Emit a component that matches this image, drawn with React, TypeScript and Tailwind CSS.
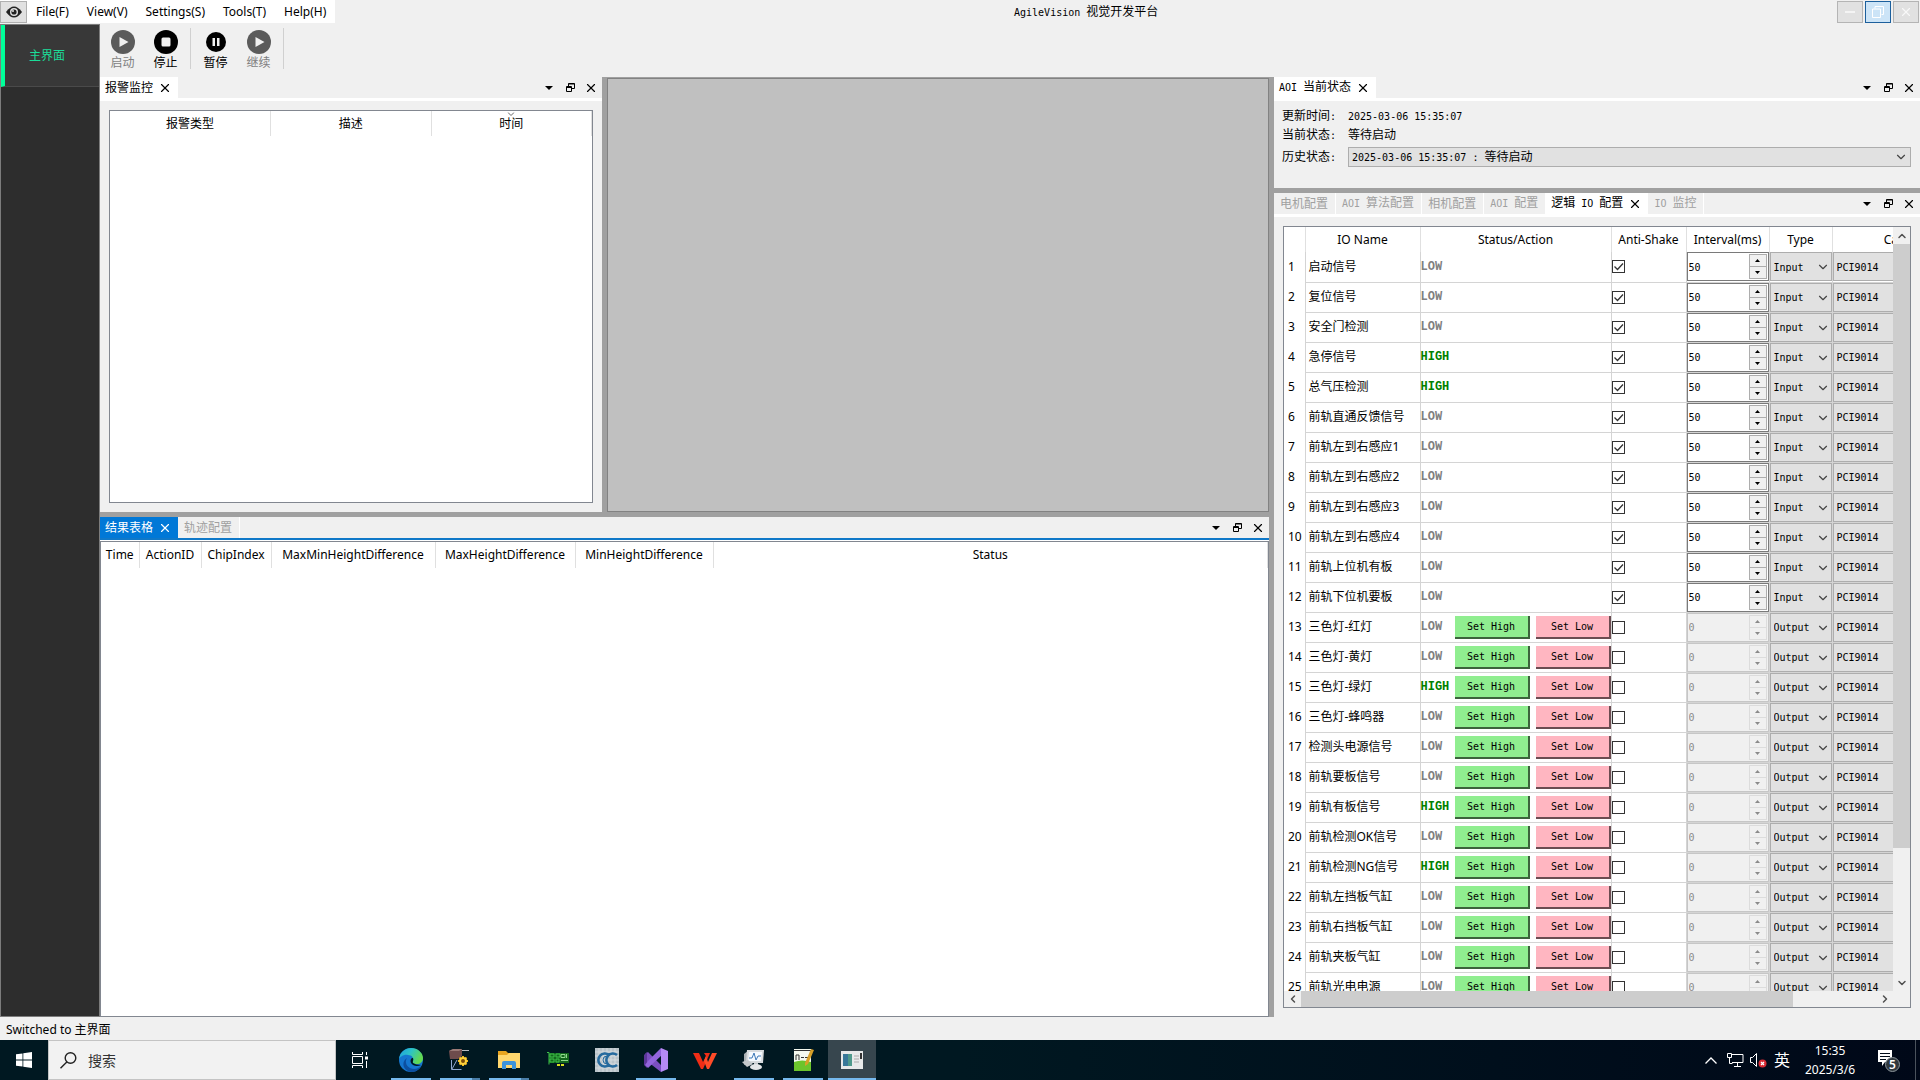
import * as React from "react";
import { ChevronDown, ChevronLeft, ChevronRight, ChevronUp, X } from "lucide-react";

interface IoRow {
  name: string;
  high?: boolean;
  output?: boolean;
}

const ioRows: IoRow[] = [
  { name: "启动信号" },
  { name: "复位信号" },
  { name: "安全门检测" },
  { name: "急停信号", high: true },
  { name: "总气压检测", high: true },
  { name: "前轨直通反馈信号" },
  { name: "前轨左到右感应1" },
  { name: "前轨左到右感应2" },
  { name: "前轨左到右感应3" },
  { name: "前轨左到右感应4" },
  { name: "前轨上位机有板" },
  { name: "前轨下位机要板" },
  { name: "三色灯-红灯", output: true },
  { name: "三色灯-黄灯", output: true },
  { name: "三色灯-绿灯", output: true, high: true },
  { name: "三色灯-蜂鸣器", output: true },
  { name: "检测头电源信号", output: true },
  { name: "前轨要板信号", output: true },
  { name: "前轨有板信号", output: true, high: true },
  { name: "前轨检测OK信号", output: true },
  { name: "前轨检测NG信号", output: true, high: true },
  { name: "前轨左挡板气缸", output: true },
  { name: "前轨右挡板气缸", output: true },
  { name: "前轨夹板气缸", output: true },
  { name: "前轨光电电源", output: true },
];

// Latin runs are set in a 6px wide mono face, Chinese runs in 12px glyphs
const Fixed: React.FC<{ children: string }> = ({ children }) => (
  <span className="whitespace-pre">
    {children.split(/([\x20-\x7e]+)/).map((part, i) =>
      i % 2 ? (
        <span key={i} className="font-['DejaVu_Sans_Mono',monospace] text-[10px]">
          {part}
        </span>
      ) : (
        part
      )
    )}
  </span>
);

const DockButtons: React.FC = () => (
  <div className="ml-auto flex items-center gap-[7px] pr-1">
    <button aria-label="菜单" className="flex w-[14px] justify-center">
      <svg width="8" height="4" viewBox="0 0 8 4">
        <path d="M0 0h8L4 4z" fill="#000" />
      </svg>
    </button>
    <button aria-label="浮动" className="flex w-[14px] justify-center">
      <svg width="9" height="9" viewBox="0 0 9 9" fill="none" stroke="#000">
        <path d="M2.5 3V.5h6v5H6M2.5 1h6M.5 3.5h5v5h-5zM.5 4.5h5" />
      </svg>
    </button>
    <button aria-label="关闭" className="flex w-[14px] justify-center">
      <X size={14} strokeWidth={2} />
    </button>
  </div>
);

interface DockTabsProps {
  tabs: string[];
  active: number;
  focused?: boolean;
}

const DockTabs: React.FC<DockTabsProps> = ({ tabs, active, focused }) => (
  <div
    className={`flex shrink-0 bg-[#f0f0f0] ${
      focused ? "mb-px h-[23px] border-b-2 border-[#0f78c8]" : "h-6 border-b-[3px] border-white"
    }`}
  >
    <div role="tablist" className="flex">
      {tabs.map((tab, i) =>
        i === active ? (
          <div
            key={tab}
            className={`flex items-center gap-[5px] pr-[6px] pl-[5px] ${
              focused ? "bg-[#0078d7] text-white" : "bg-white text-black"
            }`}
          >
            <button role="tab" aria-selected="true">
              <Fixed>{tab}</Fixed>
            </button>
            <button aria-label={`关闭 ${tab}`}>
              <X size={14} strokeWidth={2} />
            </button>
          </div>
        ) : (
          <button
            key={tab}
            role="tab"
            aria-selected="false"
            className="border-r border-white pr-[7px] pl-[6px] text-[#a0a0a0]"
          >
            <Fixed>{tab}</Fixed>
          </button>
        )
      )}
    </div>
    <DockButtons />
  </div>
);

const ToolButton: React.FC<{
  label: string;
  disabled?: boolean;
  children: React.ReactNode;
}> = ({ label, disabled, children }) => (
  <button
    disabled={disabled}
    className={`flex w-[43px] flex-col items-center pt-[6px] ${
      disabled ? "text-[#7f7f7f]" : "text-black"
    }`}
  >
    <svg width="24" height="24" viewBox="0 0 24 24">
      {children}
    </svg>
    <span className="leading-[17px]">{label}</span>
  </button>
);

const PlayIcon: React.FC = () => (
  <>
    <circle cx="12" cy="12" r="12" fill="#5b5b5b" />
    <path d="M8.5 7v10l9-5z" fill="#f0f0f0" />
  </>
);

const Toolbar: React.FC = () => (
  <div className="flex h-[53px] shrink-0 items-start pl-px">
    <ToolButton label="启动" disabled>
      <PlayIcon />
    </ToolButton>
    <ToolButton label="停止">
      <circle cx="12" cy="12" r="12" fill="#000" />
      <rect x="7.5" y="7.5" width="9" height="9" rx="1.5" fill="#f0f0f0" />
    </ToolButton>
    <div className="mx-[3px] mt-1 h-[41px] w-px bg-[#d0d0d0]" />
    <ToolButton label="暂停">
      <circle cx="12" cy="12" r="10" fill="#000" />
      <path d="M8.5 8h2.5v8H8.5zM13 8h2.5v8H13z" fill="#f0f0f0" />
    </ToolButton>
    <ToolButton label="继续" disabled>
      <PlayIcon />
    </ToolButton>
    <div className="mx-[3px] mt-1 h-[41px] w-px bg-[#d0d0d0]" />
  </div>
);

const MenuBar: React.FC = () => (
  <header className="flex h-6 shrink-0 items-start">
    <div className="flex h-[23px] items-center bg-white">
      <button
        aria-label="AgileVision"
        className="flex h-[22px] w-[27px] items-center justify-center border border-[#b0b0b0] bg-[#e1e1e1]"
      >
        <svg width="16" height="12" viewBox="0 0 16 12">
          <path d="M0 6Q8-5 16 6Q8 17 0 6z" fill="#222" />
          <circle cx="8" cy="6" r="4" fill="#e1e1e1" />
          <circle cx="8" cy="6" r="2.6" fill="#222" />
          <circle cx="7" cy="5" r="1" fill="#e1e1e1" />
        </svg>
      </button>
      <nav className="flex">
        {["File(F)", "View(V)", "Settings(S)", "Tools(T)", "Help(H)"].map((item) => (
          <button key={item} className="px-[9px] leading-[22px]">
            {item}
          </button>
        ))}
      </nav>
    </div>
    <h1 className="flex-1 text-center leading-6">
      <Fixed>AgileVision 视觉开发平台</Fixed>
    </h1>
    <div className="flex gap-[2px] pt-px pr-px">
      <button
        aria-label="最小化"
        className="flex h-[22px] w-[26px] items-center justify-center border border-[#b4b4b4] bg-[#e1e1e1]"
      >
        <span className="h-[2px] w-[10px] bg-[#f4f4f4]" />
      </button>
      <button
        aria-label="还原"
        className="flex h-[22px] w-[26px] items-center justify-center border border-[#1c5f9c] bg-[#cce4f7]"
      >
        <svg width="12" height="12" viewBox="0 0 12 12" fill="none" stroke="#fff">
          <path d="M3 2.5V.5h8.5v8H9.5M.5 3h8v8.5h-8z" />
        </svg>
      </button>
      <button
        aria-label="关闭窗口"
        className="flex h-[22px] w-[26px] items-center justify-center border border-[#b4b4b4] bg-[#e1e1e1]"
      >
        <X size={14} color="#f8f8f8" />
      </button>
    </div>
  </header>
);

const AlarmPanel: React.FC = () => (
  <section className="flex min-w-0 flex-[502] flex-col bg-[#f0f0f0]">
    <DockTabs tabs={["报警监控"]} active={0} />
    <div className="mx-[9px] mt-[9px] mb-[9px] flex-1 border border-[#828790] bg-white">
      <table className="w-full table-fixed">
        <thead>
          <tr className="h-[25px]">
            <th className="border-r border-[#e0e0e0] font-normal">报警类型</th>
            <th className="border-r border-[#e0e0e0] font-normal">描述</th>
            <th className="relative border-r border-[#e0e0e0] font-normal">
              时间
              <svg
                className="absolute top-px left-1/2 -translate-x-1/2"
                width="7"
                height="4"
                viewBox="0 0 7 4"
                fill="none"
                stroke="#666"
              >
                <path d="M.5.5l3 3 3-3" />
              </svg>
            </th>
          </tr>
        </thead>
      </table>
    </div>
  </section>
);

const ResultPanel: React.FC = () => (
  <section className="flex min-h-0 flex-[500] flex-col bg-white">
    <DockTabs tabs={["结果表格", "轨迹配置"]} active={0} focused />
    <div className="flex-1 border border-[#828790] bg-white">
      <table className="w-full table-fixed">
        <thead>
          <tr className="h-[26px] *:border-r *:border-[#e0e0e0] *:p-0 *:font-normal">
            <th className="w-[38px]">Time</th>
            <th className="w-[62px]">ActionID</th>
            <th className="w-[70px]">ChipIndex</th>
            <th className="w-[164px]">MaxMinHeightDifference</th>
            <th className="w-[140px]">MaxHeightDifference</th>
            <th className="w-[138px]">MinHeightDifference</th>
            <th>Status</th>
          </tr>
        </thead>
      </table>
    </div>
  </section>
);

const StatusPanel: React.FC = () => (
  <section className="flex h-[111px] shrink-0 flex-col">
    <DockTabs tabs={["AOI 当前状态"]} active={0} />
    <div className="grid grid-cols-[66px_1fr] pt-[6px] pr-[9px] pl-2 leading-[18px]">
      <span>
        <Fixed>更新时间:</Fixed>
      </span>
      <span>
        <Fixed>2025-03-06 15:35:07</Fixed>
      </span>
      <span>
        <Fixed>当前状态:</Fixed>
      </span>
      <span>
        <Fixed>等待启动</Fixed>
      </span>
      <label htmlFor="history" className="pt-[3px]">
        <Fixed>历史状态:</Fixed>
      </label>
      <div className="relative mt-[2px] flex h-5 items-center border border-[#adadad] bg-[#e1e1e1] pl-[3px]">
        <Fixed>2025-03-06 15:35:07 : 等待启动</Fixed>
        <select id="history" className="absolute inset-0 appearance-none opacity-0">
          <option>2025-03-06 15:35:07 : 等待启动</option>
        </select>
        <ChevronDown className="ml-auto mr-[2px]" size={14} color="#444" strokeWidth={2} />
      </div>
    </div>
  </section>
);

const CheckBox: React.FC<{ checked: boolean; label: string }> = ({ checked, label }) => (
  <span className="grid w-[13px]">
    <input
      type="checkbox"
      aria-label={label}
      defaultChecked={checked}
      className="peer col-start-1 row-start-1 size-[13px] appearance-none border border-[#333] bg-white"
    />
    <svg
      className="pointer-events-none invisible col-start-1 row-start-1 peer-checked:visible"
      width="13"
      height="13"
      viewBox="0 0 13 13"
      fill="none"
      stroke="#333"
      strokeWidth="1.3"
    >
      <path d="M2.5 6.5l3 3 5.5-6" />
    </svg>
  </span>
);

const SpinBox: React.FC<{ value: string; disabled?: boolean; label: string }> = ({
  value,
  disabled,
  label,
}) => (
  <div
    className={`flex h-[29px] border p-px ${
      disabled
        ? "border-[#c6c6c6] bg-[#f0f0f0] text-[#8a8a8a]"
        : "border-[#7a7a7a] bg-white text-black"
    }`}
  >
    <input
      aria-label={label}
      defaultValue={value}
      disabled={disabled}
      className="w-0 min-w-0 flex-1 pt-[2px] font-['DejaVu_Sans_Mono',monospace] text-[10px] outline-none"
    />
    <div className="flex w-[18px] flex-col">
      <button
        aria-label={`${label} +`}
        disabled={disabled}
        className={`flex flex-1 items-center justify-center border ${
          disabled ? "border-[#dcdcdc]" : "border-[#adadad] bg-[#f0f0f0]"
        }`}
      >
        <svg width="5" height="3" viewBox="0 0 5 3" fill="currentColor">
          <path d="M0 3h5L2.5 0z" />
        </svg>
      </button>
      <button
        aria-label={`${label} -`}
        disabled={disabled}
        className={`flex flex-1 items-center justify-center border border-t-0 ${
          disabled ? "border-[#dcdcdc]" : "border-[#adadad] bg-[#f0f0f0]"
        }`}
      >
        <svg width="5" height="3" viewBox="0 0 5 3" fill="currentColor">
          <path d="M0 0h5L2.5 3z" />
        </svg>
      </button>
    </div>
  </div>
);

const ComboBox: React.FC<{ value: string; label: string }> = ({ value, label }) => (
  <div className="relative">
    <select
      aria-label={label}
      className="block h-[29px] w-full appearance-none border border-[#adadad] bg-[#e1e1e1] pt-[2px] pl-[3px] font-['DejaVu_Sans_Mono',monospace] text-[10px]"
    >
      <option>{value}</option>
    </select>
    <ChevronDown
      className="pointer-events-none absolute top-2 right-[2px]"
      size={14}
      color="#444"
    />
  </div>
);

const IoTable: React.FC = () => (
  <table className="w-[678px] table-fixed">
    <thead>
      <tr className="h-[25px] *:border-r *:border-[#e0e0e0] *:p-0 *:font-normal">
        <th className="w-[21px]" />
        <th className="w-[115px]">IO Name</th>
        <th className="w-[191px]">Status/Action</th>
        <th className="w-[75px]">Anti-Shake</th>
        <th className="w-[83px]">Interval(ms)</th>
        <th className="w-[63px]">Type</th>
        <th className="w-[130px]">Card</th>
      </tr>
    </thead>
    <tbody>
      {ioRows.map((row, i) => (
        <tr key={row.name} className="h-[30px] *:border-r *:border-[#d4d4d4] *:p-0">
          <td>
            <span className="pl-1">{i + 1}</span>
          </td>
          <td className="border-b">
            <span className="pl-[3px]">{row.name}</span>
          </td>
          <td className="border-b">
            <div className="flex items-center">
              <span
                className={`w-[34px] font-['Liberation_Mono',monospace] text-[12px] font-bold ${
                  row.high ? "text-[#008000]" : "text-[#808080]"
                }`}
              >
                {row.high ? "HIGH" : "LOW"}
              </span>
              {row.output && (
                <div className="flex flex-1 gap-[6px] font-['DejaVu_Sans_Mono',monospace] text-[10px]">
                  <button className="h-[23px] flex-1 border-r-2 border-b-2 border-[#3c643c] bg-[#90ee90] pt-[2px]">
                    Set High
                  </button>
                  <button className="h-[23px] flex-1 border-r-2 border-b-2 border-[#6b4c51] bg-[#ffb6c1] pt-[2px]">
                    Set Low
                  </button>
                </div>
              )}
            </div>
          </td>
          <td className="border-b">
            <CheckBox checked={!row.output} label={`${row.name} Anti-Shake`} />
          </td>
          <td className="border-b">
            <SpinBox
              value={row.output ? "0" : "50"}
              disabled={row.output}
              label={`${row.name} Interval`}
            />
          </td>
          <td className="border-b">
            <ComboBox value={row.output ? "Output" : "Input"} label={`${row.name} Type`} />
          </td>
          <td className="border-b">
            <ComboBox value="PCI9014" label={`${row.name} Card`} />
          </td>
        </tr>
      ))}
    </tbody>
  </table>
);

const IoPanel: React.FC = () => (
  <section className="flex min-h-0 flex-1 flex-col">
    <DockTabs
      tabs={["电机配置", "AOI 算法配置", "相机配置", "AOI 配置", "逻辑 IO 配置", "IO 监控"]}
      active={4}
    />
    <div className="mx-[9px] mt-[9px] mb-[9px] flex min-h-0 flex-1 flex-col border border-[#828790] bg-[#f0f0f0]">
      <div className="flex min-h-0 flex-1">
        <div className="min-w-0 flex-1 overflow-hidden bg-white">
          <IoTable />
        </div>
        <div className="flex w-[17px] flex-col items-center">
          <button aria-label="向上滚动" className="flex h-[17px] items-center">
            <ChevronUp size={12} color="#505050" strokeWidth={3} />
          </button>
          <div className="flex w-full flex-1 flex-col">
            <div className="flex-[604] bg-[#cdcdcd]" />
            <div className="flex-[126]" />
          </div>
          <button aria-label="向下滚动" className="flex h-[17px] items-center">
            <ChevronDown size={12} color="#505050" strokeWidth={3} />
          </button>
        </div>
      </div>
      <div className="flex h-4 items-center pr-[17px]">
        <button aria-label="向左滚动" className="flex w-[17px] justify-center">
          <ChevronLeft size={12} color="#505050" strokeWidth={3} />
        </button>
        <div className="flex h-full flex-1">
          <div className="flex-[492] bg-[#cdcdcd]" />
          <div className="flex-[83]" />
        </div>
        <button aria-label="向右滚动" className="flex w-[17px] justify-center">
          <ChevronRight size={12} color="#505050" strokeWidth={3} />
        </button>
      </div>
    </div>
  </section>
);

const apps = [
  {
    name: "Edge",
    open: true,
    icon: (
      <>
        <defs>
          <linearGradient id="edgeTop" x1="0" y1="0" x2="1" y2="0.4">
            <stop offset="0" stopColor="#1e9fe0" />
            <stop offset="0.5" stopColor="#2cc3c8" />
            <stop offset="1" stopColor="#63d94f" />
          </linearGradient>
        </defs>
        <circle cx="12" cy="12" r="12" fill="#1576d0" />
        <path d="M0 11C1 4 6 0 12 0c7 0 12 5 12 10 0 4-3 6-6 6-3 0-5-1-4-3 1-3-1-6-5-6-4-1-8 2-9 4z" fill="url(#edgeTop)" />
        <path d="M8 10c-3 4 0 11 7 11 3 0 5-1 7-3-3 6-9 7-13 5C3 20 3 13 8 10z" fill="#0c4fa0" />
        <path d="M14 10c-2 0-3 2-2 5 2 3 6 4 10 2-4 0-6-1-8-2-1-1 1-3 0-5z" fill="#001821" />
      </>
    ),
  },
  {
    name: "Motion",
    open: true,
    split: true,
    icon: (
      <>
        <path d="M1 3l4-2h9v7l-4 3H2z" fill="#6e4c4c" />
        <path d="M1 3l4-2h9l-3 2z" fill="#9a7a76" />
        <path d="M14 2h7v1h-7z" fill="#b8bdc2" />
        <path d="M3.500 12v9.500h10M4 21l5-9" stroke="#8fa8d0" fill="none" />
        <path d="M15 8v10M10 13h10M11.500 9.500l7 7M18.500 9.500l-7 7" stroke="#f0b81e" strokeWidth="2" />
        <circle cx="15" cy="13" r="3" fill="#7a4a08" stroke="#ffd23c" strokeWidth="2" />
      </>
    ),
  },
  {
    name: "Explorer",
    open: true,
    split: true,
    icon: (
      <>
        <path d="M1 3h8l2 2h12v15H1z" fill="#e8a520" />
        <path d="M1 7h9l2-2h11v15H1z" fill="#ffd76e" />
        <path d="M5 21v-6q0-2 2-2h10q2 0 2 2v6h-4v-4H9v4z" fill="#3c93da" />
      </>
    ),
  },
  {
    name: "PCI",
    icon: (
      <>
        <path d="M3 5h20v10H3z" fill="#12661c" />
        <path d="M1 4.500h2v12M4 6h4v3H4zM10 6h4v3h-4zM4 11h4v3H4zM10 11h3v3h-3z" fill="none" stroke="#3fc04a" />
        <path d="M15 6.500h4v3h-4zM20.500 6v4M15 12.500h7" fill="none" stroke="#8ed88c" />
        <path d="M11 16h3v2h-3zM15 16h3v2h-3z" fill="#d8e020" />
      </>
    ),
  },
  {
    name: "CC",
    icon: (
      <>
        <path d="M0 0h24v24H0z" fill="#b9c3c9" />
        <path d="M0 4h24M0 8h24M0 12h24M0 16h24M0 20h24M4 0v24M8 0v24M12 0v24M16 0v24M20 0v24" stroke="#d4dade" />
        <path d="M14 7A6.500 6.500 0 1 0 14 17M22 7A6.500 6.500 0 1 0 22 17" fill="none" stroke="#256a9e" strokeWidth="2.600" />
        <path d="M12 8A4 4 0 0 0 12 16" fill="none" stroke="#256a9e" />
      </>
    ),
  },
  {
    name: "Visual Studio",
    open: true,
    icon: (
      <>
        <path d="M1 6l3-2 14 14-1 6L4 14l-3 4z" fill="#7b4fc0" />
        <path d="M0 7l3-3v16l-3-3z" fill="#5c3699" />
        <path d="M17 0L4 13l-3 4 3 3L18 7z" fill="#9265dc" />
        <path d="M17 0l7 3v18l-7 3z" fill="#b58af5" />
      </>
    ),
  },
  {
    name: "WPS",
    icon: (
      <>
        <path d="M0 5h6l4 9 3-6-2-3h6l-7 16H8z" fill="#f02d16" />
        <path d="M11 13l3 8h2l8-16h-5l-4 9-2-6z" fill="#ff4b28" />
      </>
    ),
  },
  {
    name: "Monitor",
    open: true,
    icon: (
      <>
        <path d="M2 6l5-4v12l-5 3z" fill="#aab0b4" />
        <path d="M5 2h17l-1 13H4z" fill="#d6dadd" />
        <path d="M7 4h13l-1 9H6z" fill="#f5faff" />
        <path d="M7 10h3l2-5 2 7 2-4h3" fill="none" stroke="#3c78b8" />
        <path d="M0 14l6-2 5 4-6 3z" fill="#c4c8cb" />
        <path d="M12 15h4v3h-4z" fill="#c4c8cb" />
        <ellipse cx="14" cy="19" rx="6" ry="3" fill="#e4e6e8" />
      </>
    ),
  },
  {
    name: "Notepad++",
    open: true,
    icon: (
      <>
        <path d="M3 1h17v22H3z" fill="#f4f8ee" />
        <path d="M3 14q8-3 17 0v9H3z" fill="#6cc42c" />
        <path d="M5 12V7h3v5M10 9.500h3M14 9.500h3M3 2.500h17" stroke="#333" fill="none" />
        <path d="M20 1l3 1-6 14-3 2v-3z" fill="#d8a028" />
      </>
    ),
  },
  {
    name: "AgileVision",
    open: true,
    active: true,
    icon: (
      <>
        <path d="M1 3h22v18H1z" fill="#e8eaea" />
        <path d="M3 6h9v12H3z" fill="#4f9a8c" />
        <path d="M3 6h5v12H3z" fill="#39799a" />
        <path d="M14 8h5M14 11h5M14 14h5" stroke="#aaa" />
        <path d="M20 5h2v6h-2z" fill="#333" />
      </>
    ),
  },
];

const Taskbar: React.FC = () => (
  <footer className="flex h-10 shrink-0 items-center bg-linear-to-r from-[#001821] from-50% to-[#000818] text-white">
    <button aria-label="开始" className="flex w-12 justify-center">
      <svg width="16" height="16" viewBox="0 0 16 16" fill="#fff">
        <path d="M0 2.300l6.500-.9v6.100H0zM7.300 1.300L16 0v7.500H7.300zM0 8.400h6.500v6.200L0 13.700zM7.300 8.400H16V16l-8.700-1.300z" />
      </svg>
    </button>
    <label className="flex h-full w-72 items-center border border-[#c4c4c4] bg-[#f2f2f2] pl-[11px] text-[#222]">
      <svg width="17" height="17" viewBox="0 0 17 17" fill="none" stroke="#222" strokeWidth="1.400">
        <circle cx="10.500" cy="6" r="5.300" />
        <path d="M6.800 10L.5 16.300" />
      </svg>
      <input
        aria-label="搜索"
        placeholder="搜索"
        className="ml-[11px] w-0 flex-1 pt-[2px] text-[14px] outline-none placeholder:text-[#333]"
      />
    </label>
    <button aria-label="任务视图" className="mr-[3px] flex w-12 justify-center">
      <svg width="17" height="16" viewBox="0 0 17 16" fill="none" stroke="#fff">
        <path d="M.5 0v2.500h10V0M.5 4.500h10v7H.5zM.5 16v-2.500h10V16M14.500 0v3M14.500 9v7" />
        <path d="M13 4.500h3v3h-3z" fill="#fff" stroke="none" />
      </svg>
    </button>
    <div className="flex h-full gap-px">
      {apps.map((app) => (
        <button
          key={app.name}
          aria-label={app.name}
          className={`flex w-12 flex-col items-center pt-2 ${app.active ? "bg-[#37464e]" : ""}`}
        >
          <svg width="24" height="24" viewBox="0 0 24 24">
            {app.icon}
          </svg>
          {app.open && (
            <span className={`mt-auto flex h-[2px] bg-[#76b9ed] ${app.active ? "w-12" : "w-10"}`}>
              {app.split && <span className="ml-auto w-2 bg-[#4a7ea8]" />}
            </span>
          )}
        </button>
      ))}
    </div>
    <div className="ml-auto flex h-full items-center">
      <button aria-label="显示隐藏的图标" className="flex w-6 justify-center">
        <svg width="12" height="7" viewBox="0 0 12 7" fill="none" stroke="#fff" strokeWidth="1.300">
          <path d="M.5 6.500L6 1l5.500 5.500" />
        </svg>
      </button>
      <button aria-label="网络" className="flex w-6 justify-center">
        <svg width="17" height="14" viewBox="0 0 17 14" fill="none" stroke="#fff">
          <path d="M5 1.500h11v8H5M10.500 9.500v4M7 13.500h7M.5.500h4v4h-4zM2.500 4.500v6h3" />
        </svg>
      </button>
      <button aria-label="音量" className="flex w-[23px] justify-center">
        <svg width="17" height="16" viewBox="0 0 17 16">
          <path d="M.5 5.500h2l4-4v13l-4-4h-2z" fill="none" stroke="#fff" />
          <circle cx="12.500" cy="11.500" r="4" fill="#d92c35" />
          <path d="M11 10l3 3M14 10l-3 3" stroke="#fff" strokeWidth="1.200" />
        </svg>
      </button>
      <button className="w-6 text-[16px]">英</button>
      <div className="w-[72px] text-center leading-[19px]">
        <div>15:35</div>
        <div>2025/3/6</div>
      </div>
      <button aria-label="通知" className="mr-1 flex w-[45px] justify-center">
        <svg width="24" height="26" viewBox="0 0 24 26">
          <path d="M1 3h14v12H8l-3 4v-4H1z" fill="#fff" />
          <path d="M3 6.500h10M3 9.500h10M3 12.500h6" stroke="#000a18" />
          <circle cx="15.500" cy="17.500" r="7" fill="#30383e" stroke="#8b949a" />
          <text x="15.500" y="22" textAnchor="middle" fontSize="12" fontWeight="600" fill="#fff">
            5
          </text>
        </svg>
      </button>
      <div className="mr-1 h-full w-px bg-[#4a525c]" />
    </div>
  </footer>
);

const App: React.FC = () => {
  return (
    <div className="flex h-screen flex-col overflow-hidden bg-[#f0f0f0] font-['Noto_Sans','Noto_Sans_CJK_SC',sans-serif] text-[12px] leading-4 text-black">
      <MenuBar />
      <main className="flex min-h-0 flex-1">
        <aside className="w-[100px] shrink-0 border border-[#7c7c7c] bg-[#2d2d2d]">
          <button className="flex h-[62px] w-full items-center justify-center border-b border-l-4 border-b-[#4a4a4a] border-l-[#00ff99] bg-[#383838] pt-px pr-[10px] text-[#1bdc98]">
            主界面
          </button>
        </aside>
        <div className="flex min-w-0 flex-1 flex-col">
          <Toolbar />
          <div className="flex min-h-0 flex-1">
            <div className="flex min-w-0 flex-[1169] flex-col gap-[5px] bg-[#a0a0a0]">
              <div className="flex min-h-0 flex-[435] gap-[5px]">
                <AlarmPanel />
                <div className="flex min-w-0 flex-[662] pt-px">
                  <div className="flex-1 border border-[#828282] bg-[#c0c0c0]" />
                </div>
              </div>
              <ResultPanel />
            </div>
            <div className="w-[5px] bg-[#a0a0a0]" />
            <div className="flex min-w-0 flex-[646] flex-col">
              <StatusPanel />
              <div className="h-[5px] shrink-0 bg-[#a0a0a0]" />
              <IoPanel />
            </div>
          </div>
        </div>
      </main>
      <div className="h-[23px] shrink-0 pt-px pl-[6px] leading-6">Switched to 主界面</div>
      <Taskbar />
    </div>
  );
};

export default App;
